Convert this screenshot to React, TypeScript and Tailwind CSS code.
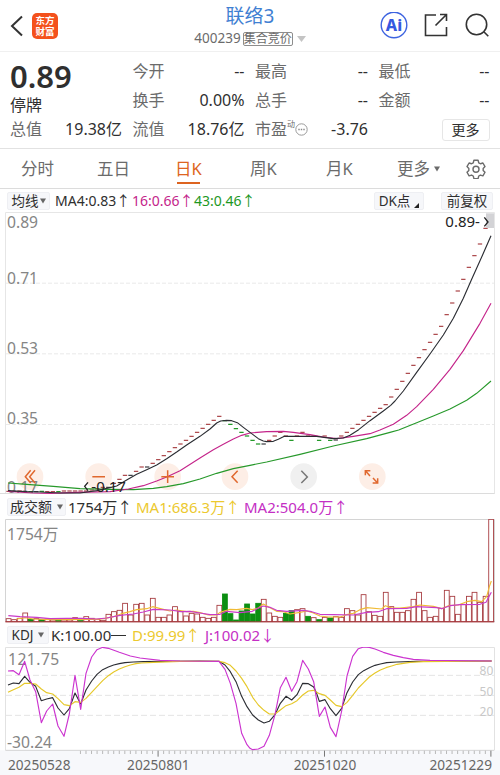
import type { ReactNode } from 'react';

const STEP = 16.64;
const FIRST_X = 25;

const RED = '#a5383c';
const GREEN = '#0c8f12';
const DARK = '#2b2d33';

// All three charts share one horizontal scale: 1500 units across 500px.
const volumeTops = [
  311, 314, 310, 294, 313, 311, 313, 312, 315, 316, 315, 315, 308, 317, 305, 310, 313, 316, 298, 290, 286, 265,
  300, 268, 265, 300, 250, 307, 307, 300, 275, 290, 303, 295, 297, 307, 310, 307, 271, 237, 296, 315, 288, 267,
  297, 265, 253, 294, 304, 307, 295, 287, 284, 281, 304, 308, 314, 307, 309, 305, 307, 281, 287, 300, 239, 290,
  301, 304, 232, 275, 292, 292, 287, 253, 232, 287, 307, 304, 280, 226, 244, 298, 268, 244, 232, 262, 244, 13,
];
const volumeDown = [4, 6, 9, 13, 39, 40, 41, 42, 43, 44, 45, 50, 51, 54, 56, 58];

const priceY = [
  1474, 1474, 1473, 1474, 1475, 1475, 1474, 1475, 1475, 1475, 1473, 1473, 1473, 1473, 1473, 1470, 1466, 1462, 1462,
  1450, 1438, 1426, 1426, 1414, 1401, 1401, 1390, 1379, 1367, 1355, 1343, 1332, 1321, 1309, 1297, 1285, 1273, 1261,
  1249, 1262, 1273, 1286, 1297, 1308, 1321, 1332, 1332, 1321, 1308, 1297, 1308, 1321, 1308, 1297, 1308, 1308, 1321,
  1308, 1321, 1320, 1308, 1297, 1285, 1273, 1261, 1249, 1237, 1225, 1214, 1191, 1168, 1144, 1120, 1096, 1073, 1049,
  1027, 1003, 979, 944, 909, 873, 838, 802, 767, 732, 685,
];
const priceDown = [4, 6, 9, 39, 40, 41, 42, 43, 44, 45, 51, 56, 58];
const priceFlat = [1, 3, 5, 18, 22, 25, 46, 59];

const ma4 =
  '24,1472 60,1474 80,1475 120,1476 180,1479 240,1479 290,1472 330,1463 350,1458 380,1440 410,1423 440,1409 470,1395 500,1376 530,1356 560,1335 600,1309 630,1287 650,1269 662,1263 680,1261 695,1262 712,1268 730,1282 750,1297 775,1316 790,1323 800,1325 820,1324 835,1318 853,1309 950,1309 1000,1316 1030,1314 1050,1306 1076,1289 1110,1262 1150,1233 1172,1216 1185,1203 1210,1173 1250,1117 1290,1062 1330,1005 1360,955 1390,895 1415,838 1450,760 1473,707';
const ma16 =
  '24,1474 100,1479 150,1480 230,1477 330,1475 385,1467 430,1457 470,1443 500,1431 540,1412 600,1374 640,1349 670,1333 700,1317 725,1306 750,1299 800,1295 850,1294 880,1297 930,1304 970,1311 1010,1316 1060,1309 1110,1301 1140,1290 1180,1273 1220,1246 1250,1220 1300,1168 1350,1108 1390,1052 1440,970 1473,910';
const ma43 =
  '24,1449 80,1453 160,1459 240,1466 330,1468 400,1469 460,1465 500,1460 550,1451 600,1437 650,1420 700,1406 750,1396 800,1386 900,1363 1000,1338 1100,1316 1170,1297 1196,1290 1250,1268 1300,1248 1350,1227 1400,1201 1430,1180 1473,1143';

const volMa1 =
  '50,312 75,308 100,312 150,314 200,314 250,313 290,313 315,310 340,305 365,296 390,290 410,284 440,281 458,275 490,283 510,288 530,285 560,290 580,289 600,293 625,300 650,300 660,292 690,283 710,284 740,280 757,284 775,279 790,267 810,278 830,289 850,290 870,297 900,292 920,288 935,292 960,303 985,306 1020,306 1040,299 1060,295 1080,284 1100,278 1145,282 1156,272 1175,279 1200,279 1240,275 1260,270 1300,274 1325,281 1345,272 1375,270 1400,260 1425,256 1445,260 1460,245 1468,215 1474,198';
const volMa2 =
  '25,302 60,305 110,307 150,311 200,310 245,310 290,312 320,309 360,301 400,297 430,291 460,283 510,285 545,290 570,289 600,294 630,299 660,298 680,289 720,293 757,289 775,279 790,273 810,277 830,286 860,289 910,286 935,290 960,298 1000,299 1060,300 1100,292 1135,290 1160,281 1220,280 1250,275 1310,278 1325,281 1350,272 1380,269 1440,268 1458,262 1474,232';

const kLine =
  '24,135 40,129 57,131 74,109 90,127 107,139 124,182 140,177 158,173 174,204 192,225 208,206 225,159 242,192 258,150 275,123 291,103 308,89 325,81 341,75 358,71 375,68 400,66 430,65 500,64 600,63 657,64 675,75 691,95 708,125 725,169 741,200 758,225 775,240 792,249 808,244 825,224 841,190 858,169 875,180 891,164 908,130 925,131 941,141 950,160 958,184 975,179 991,206 1008,227 1025,205 1041,158 1058,126 1075,104 1091,92 1108,83 1125,76 1141,72 1160,68 1190,66 1250,64 1475,63';
const dLine =
  '24,157 40,149 57,142 74,130 90,130 107,132 124,147 140,158 158,162 174,176 192,194 208,197 225,185 242,187 258,175 275,157 291,140 308,122 325,107 341,96 358,87 375,80 391,75 408,71 425,69 460,67 540,64 657,64 675,68 691,76 708,93 725,115 741,140 758,172 775,195 792,211 808,222 825,222 841,210 858,197 875,191 891,182 908,165 925,153 941,151 958,161 975,166 991,180 1008,196 1025,200 1041,187 1058,166 1075,144 1091,128 1108,111 1125,99 1141,90 1158,83 1175,78 1191,73 1210,70 1230,67 1270,65 1475,63';
const jLine =
  '24,93 40,92 57,104 74,64 90,120 107,155 124,248 140,213 158,192 174,258 192,289 208,222 225,106 242,208 258,100 275,51 291,29 308,22 325,25 358,37 391,48 420,54 480,61 540,63 657,64 675,88 691,130 708,190 725,280 741,314 750,325 758,329 775,327 792,319 808,286 825,224 841,143 858,112 875,154 891,125 908,61 925,87 941,125 958,229 975,201 991,262 1008,290 1025,213 1041,108 1058,49 1075,26 1091,21 1108,22 1125,27 1150,37 1180,46 1210,53 1240,58 1290,61 1475,63';

function Line({ points, color }: { points: string; color: string }) {
  return <polyline points={points} fill="none" stroke={color} strokeWidth="3.4" strokeLinejoin="round" />;
}

function Arrow({ down = false }: { down?: boolean }) {
  return <span className="font-['Noto_Sans_CJK_SC',sans-serif] leading-none">{down ? '↓' : '↑'}</span>;
}

function Caret({ className = '' }: { className?: string }) {
  return (
    <svg className={className} width="6" height="6" viewBox="0 0 6 6">
      <path d="M0 0.5h6L3 5.5z" fill="currentColor" />
    </svg>
  );
}

function Stat({ label, value }: { label: ReactNode; value: string }) {
  return (
    <div className="flex items-center justify-between">
      <span className="text-[#6b6b6b]">{label}</span>
      <span>{value}</span>
    </div>
  );
}

function Header() {
  return (
    <header className="flex h-[52px] items-center border-b border-[#f0f0f0]">
      <div className="flex w-[194px] items-center">
        <svg className="ml-[10px]" width="14" height="22" viewBox="0 0 14 22">
          <path d="M12 1.5L2 11l10 9.5" fill="none" stroke="#333" strokeWidth="2" />
        </svg>
        <div className="ml-2 flex size-[26px] flex-col items-center justify-center rounded-[5px] bg-[#f4511c] text-[9.5px] leading-[11px] font-bold text-white">
          <span>东方</span>
          <span>财富</span>
        </div>
      </div>
      <div className="flex w-[112px] flex-col items-center">
        <h1 className="text-[19px] leading-[26px] text-[#3f80d2]">联络3</h1>
        <div className="flex h-[19px] items-center gap-[2px] text-[#6b6b6b]">
          <span className="text-[13.5px]">400239</span>
          <span className="rounded-[2px] border border-[#8d8d8d] text-[12px] leading-[12px] whitespace-nowrap">集合竞价</span>
          <svg className="ml-[2px]" width="9" height="6" viewBox="0 0 9 6">
            <path d="M0 0h9L4.5 6z" fill="#c4c4c4" />
          </svg>
        </div>
      </div>
      <div className="ml-auto flex items-center pr-[11px] text-[#333]">
        <svg width="28" height="28" viewBox="0 0 28 28">
          <circle cx="14" cy="13" r="12.8" fill="none" stroke="#3d63e0" strokeWidth="1.4" />
          <text x="14" y="18.500" textAnchor="middle" fontSize="16" fontWeight="800" fill="#3558e0">Ai</text>
        </svg>
        <svg className="mt-[-2px] ml-[16px]" width="24" height="24" viewBox="0 0 24 24" fill="none" stroke="currentColor" strokeWidth="1.6">
          <path d="M12 2H1.5v20.5h21V14M16 1.5h6.5V8M22 2L11.5 12.5" />
        </svg>
        <svg className="mt-[-2px] ml-[17px]" width="24" height="24" viewBox="0 0 24 24" fill="none" stroke="currentColor" strokeWidth="1.6">
          <circle cx="11.5" cy="11.5" r="10.2" />
          <path d="M18.8 18.8l4.5 4.5" />
        </svg>
      </div>
    </header>
  );
}

function Quote() {
  return (
    <section className="grid h-[97px] grid-cols-[112px_112px_113px_111px] grid-rows-[29px_29px_29px] gap-x-[10.5px] border-b border-[#e2e2e2] pt-[5px] pl-[10px] text-[16px] leading-[29px]">
      <div className="row-span-2 flex flex-col">
        <span className="mt-[3px] text-[31px] leading-[32px] font-semibold">0.89</span>
        <span className="mt-px text-[16px] leading-[24px]">停牌</span>
      </div>
      <Stat label="今开" value="--" />
      <Stat label="最高" value="--" />
      <Stat label="最低" value="--" />
      <Stat label="换手" value="0.00%" />
      <Stat label="总手" value="--" />
      <Stat label="金额" value="--" />
      <Stat label="总值" value="19.38亿" />
      <Stat label="流值" value="18.76亿" />
      <Stat
        label={
          <span className="flex items-center">
            市盈
            <span className="mb-3 text-[8px] leading-none">动</span>
            <svg width="13" height="13" viewBox="0 0 13 13">
              <circle cx="6.5" cy="6.5" r="5.7" fill="none" stroke="#999" />
              <path d="M3.3 6.5h1.4M5.8 6.5h1.4M8.3 6.5h1.4" stroke="#888" strokeWidth="1.3" />
            </svg>
          </span>
        }
        value="-3.76"
      />
      <div className="flex items-center justify-end">
        <button className="h-[22px] w-[48px] rounded-[3px] border border-[#e6e6e6] text-[14px] leading-[20px]">更多</button>
      </div>
    </section>
  );
}

function Tabs() {
  return (
    <nav className="flex h-[40px] items-center border-b border-[#dcdcdc] pt-px pl-[21px] text-[16.5px] leading-[24px] text-[#6b6b6b]">
      <span className="w-[76px]">分时</span>
      <span className="w-[78px]">五日</span>
      <span className="flex w-[75px] flex-col text-[#dd6420]">
        <span className="mt-[3px]">日K</span>
        <span className="mt-px ml-[2px] h-[2px] w-[23px] bg-[#dd6420]" />
      </span>
      <span className="w-[76px]">周K</span>
      <span className="w-[71px]">月K</span>
      <span className="flex w-[69px] items-center">
        更多
        <Caret className="ml-[4px]" />
      </span>
      <svg width="20" height="20" viewBox="0 0 24 24" fill="none" stroke="currentColor" strokeWidth="1.7" strokeLinejoin="round">
        <path d="M9.5 1.5h5l.8 3.1 2 1.1 3-.9 2.5 4.3-2.2 2.2v2.4l2.2 2.2-2.5 4.3-3-.9-2 1.1-.8 3.1h-5l-.8-3.1-2-1.1-3 .9-2.5-4.3 2.2-2.2v-2.4L1.2 9.100l2.500-4.300 3 .9 2-1.100z" />
        <circle cx="12" cy="12.300" r="3.600" />
      </svg>
    </nav>
  );
}

function Chip({ children, className = '' }: { children: ReactNode; className?: string }) {
  return (
    <span className={`flex h-[18px] items-center justify-center rounded-[2px] border border-[#eeeff3] bg-[#f6f7fa] whitespace-nowrap ${className}`}>
      {children}
    </span>
  );
}

function PriceChart() {
  return (
    <svg className="block overflow-visible" width="500" height="282" viewBox="0 636 1500 846">
      <path d="M16.500 1482V637.500H1483.500V1482" fill="none" stroke="#e6e6e6" strokeWidth="3" />
      <path d="M0 1480.500H1483" stroke="#dcdcdc" strokeWidth="3" />
      <path d="M18 849.500H1482M18 1061.500H1482M18 1273.500H1482" stroke="#e9e9e9" strokeWidth="3" strokeDasharray="12 6" />
      {[90, 296, 503, 705, 911, 1117].map((x) => (
        <circle key={x} cx={x} cy="1430" r="40" fill={x === 911 ? '#f0f0f0' : '#fdeee6'} />
      ))}
      <g fill="#858585" fontSize="47">
        <text x="21" y="685">0.89</text>
        <text x="21" y="852">0.71</text>
        <text x="21" y="1062">0.53</text>
        <text x="21" y="1273">0.35</text>
        <text x="21" y="1480">0.17</text>
      </g>
      {priceY.map((y, i) => {
        const x = FIRST_X + i * STEP;
        const color = priceDown.includes(i) ? GREEN : priceFlat.includes(i) ? DARK : RED;
        return <path key={i} d={`M${x - 6} ${y}h13`} stroke={color} strokeWidth="3.4" />;
      })}
      <Line points={ma43} color="#27992b" />
      <Line points={ma16} color="#c4248a" />
      <Line points={ma4} color={DARK} />
      <g fill="none" stroke="#e0682e" strokeWidth="4.500">
        <path d="M92 1411L76 1430l16 19M105 1411L89 1430l16 19" />
        <path d="M277 1430h38M484 1430h38M503 1411v38" />
        <path d="M713 1412l-17 18 17 18" />
        <path d="M904 1412l18 19-18 18" stroke="#777" />
        <path d="M1110 1428l-13-15M1096 1426v-14h15M1119 1434l13 14M1133 1435v14h-15" />
      </g>
      <rect x="1458" y="640" width="24" height="44" fill="#d3d3d6" />
      <g fill="#222" fontSize="45">
        <text x="1336" y="680">0.89-</text>
        <text x="274" y="1476">-0.17</text>
      </g>
      <path d="M1453 652l11 14-11 13M264 1447l-10 12 10 13" fill="none" stroke="#222" strokeWidth="4" />
    </svg>
  );
}

function VolumeChart() {
  return (
    <svg className="block" width="500" height="104" viewBox="0 12 1500 312">
      <path d="M16.500 321V13.500H1483.500V321" fill="none" stroke="#d4d4d4" strokeWidth="3" />
      <text x="21" y="74" fill="#858585" fontSize="47">1754万</text>
      {volumeTops.map((top, i) => {
        const down = volumeDown.includes(i);
        return (
          <rect
            key={i}
            x={18.500 + i * STEP}
            y={top}
            width="14.500"
            height={320 - top}
            fill={down ? GREEN : '#fff'}
            stroke={down ? GREEN : RED}
            strokeWidth="2.600"
          />
        );
      })}
      <path d="M16 320.500H1483" stroke={RED} strokeWidth="3" />
      <Line points={volMa1} color="#f0bb35" />
      <Line points={volMa2} color="#c93bc9" />
    </svg>
  );
}

function KdjChart() {
  const ticks = Array.from({ length: 75 }, (_, i) => i + 13);
  return (
    <svg className="block" width="500" height="128" viewBox="0 21 1500 384">
      <rect x="0" y="331" width="1500" height="74" fill="#f7f8fb" />
      <path d="M16.500 330V22.500H1483.500V330" fill="none" stroke="#e2e2e2" strokeWidth="3" />
      <path d="M18 106H1482M18 166H1482M18 226H1482" stroke="#e4e4e4" strokeWidth="3" strokeDasharray="18 9" />
      <path d="M16 331H1483" stroke="#d4d4d4" strokeWidth="3" />
      {ticks.map((i) => {
        const major = i === 27 || i === 57 || i === 87;
        const x = FIRST_X + i * STEP;
        return <path key={i} d={`M${x} 332v${major ? 18 : 10}`} stroke={major ? '#777' : '#b8b8b8'} strokeWidth="3" />;
      })}
      <g fill="#858585" fontSize="47">
        <text x="24" y="75" textLength="154">121.75</text>
        <text x="21" y="324">-30.24</text>
      </g>
      <g fill="#c8c8c8" fontSize="36" textAnchor="end">
        <text x="1480" y="106">80</text>
        <text x="1480" y="167">50</text>
        <text x="1480" y="228">20</text>
      </g>
      <Line points={kLine} color={DARK} />
      <Line points={dLine} color="#e6c829" />
      <Line points={jLine} color="#cb33cf" />
      <g fill="#666" fontSize="41">
        <text x="24" y="390">20250528</text>
        <text x="475" y="390" textAnchor="middle">20250801</text>
        <text x="975" y="390" textAnchor="middle">20251020</text>
        <text x="1476" y="390" textAnchor="end">20251229</text>
      </g>
    </svg>
  );
}

export default function App() {
  return (
    <div className="h-[775px] w-[500px] overflow-hidden bg-white font-['Noto_Sans','Noto_Sans_CJK_SC',sans-serif] text-[#2f2f2f]">
      <Header />
      <Quote />
      <Tabs />

      <div className="flex h-[23px] items-center pt-px pl-[7px] text-[14px] leading-[18px]">
        <Chip className="w-[43px] gap-px text-[13.5px]">
          均线
          <Caret className="text-[#666]" />
        </Chip>
        <span className="ml-[5px] w-[77px] whitespace-nowrap">MA4:0.83<Arrow /></span>
        <span className="w-[62px] whitespace-nowrap text-[#c4248a]">16:0.66<Arrow /></span>
        <span className="whitespace-nowrap text-[#1d981f]">43:0.46<Arrow /></span>
        <Chip className="ml-auto w-[50px] gap-[4px] text-[13.5px]">
          DK点
          <svg className="mt-2" width="5" height="5" viewBox="0 0 5 5">
            <path d="M5 0v5H0z" fill="#222" />
          </svg>
        </Chip>
        <Chip className="mr-[7px] ml-[17px] w-[52px] text-[13.5px]">前复权</Chip>
      </div>
      <PriceChart />

      <div className="flex h-[25px] items-center pl-[7px] text-[15px] leading-[18px]">
        <Chip className="w-[59px] gap-[5px] text-[14px]">
          成交额
          <Caret className="text-[#666]" />
        </Chip>
        <span className="ml-[2px] w-[68px] whitespace-nowrap">1754万<Arrow /></span>
        <span className="w-[108px] whitespace-nowrap text-[#ecc92f]">MA1:686.3万<Arrow /></span>
        <span className="whitespace-nowrap text-[#c42fc4]">MA2:504.0万<Arrow /></span>
      </div>
      <VolumeChart />

      <div className="flex h-[24px] items-center pl-[7px] text-[15px] leading-[18px]">
        <Chip className="w-[42px] gap-[5px] text-[13.5px]">
          KDJ
          <Caret className="text-[#666]" />
        </Chip>
        <span className="ml-[2px] flex w-[81px] items-center whitespace-nowrap">
          K:100.00
          <span className="h-px w-[15px] bg-[#2f2f2f]" />
        </span>
        <span className="w-[73px] whitespace-nowrap text-[#ecc92f]">D:99.99<Arrow /></span>
        <span className="whitespace-nowrap text-[#c42fc4]">J:100.02<Arrow down /></span>
      </div>
      <KdjChart />
    </div>
  );
}
